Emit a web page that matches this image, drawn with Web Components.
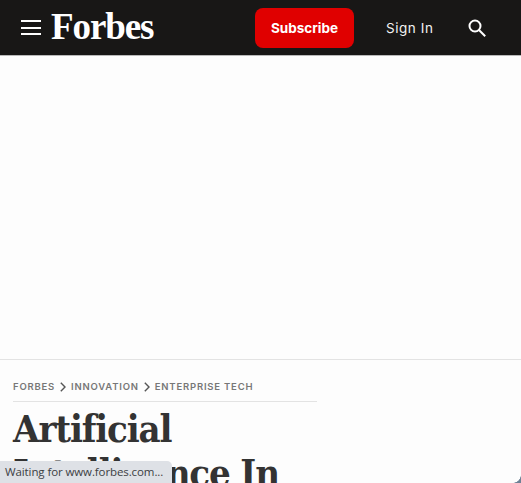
<!DOCTYPE html>
<html>
<head>
<meta charset="utf-8">
<style>
  html, body { margin: 0; height: 100%; overflow: hidden; background: #fdfdfd; }
</style>
</head>
<body>
<site-header></site-header>
<ad-space></ad-space>
<article-head>
  <bread-crumbs></bread-crumbs>
  Artificial Intelligence In
</article-head>
<status-bubble>Waiting for www.forbes.com...</status-bubble>
<window-corner></window-corner>

<script>
customElements.define('site-header', class extends HTMLElement {
  constructor() {
    super();
    this.attachShadow({mode: 'open'}).innerHTML = `
    <style>
      :host { display: flex; align-items: center; height: 55px; background: #181716; border-bottom: 1px solid #b9b9b9; color: #fff; font-family: Inter, "Liberation Sans", sans-serif; }
      .burger { display: flex; flex-direction: column; gap: 4.5px; width: 20px; margin-left: 21px; }
      .burger i { display: block; height: 2px; background: #fff; }
      .logo { font: bold 37px "Liberation Serif", serif; letter-spacing: -1.1px; margin-left: 10px; width: 104px; line-height: 1; padding-bottom: 3px; }
      .sub { margin-left: 100px; width: 99px; height: 40px; border-radius: 8px; background: #e00000; display: flex; align-items: center; justify-content: center; font-size: 13.5px; font-weight: 700; }
      .sign { margin-left: 32px; font-size: 13.5px; letter-spacing: .55px; color: #f2f2f2; }
      svg { margin-left: 35px; display: block; }
    </style>
    <div class="burger"><i></i><i></i><i></i></div>
    <div class="logo">Forbes</div>
    <div class="sub">Subscribe</div>
    <div class="sign">Sign In</div>
    <svg width="18" height="18" viewBox="0 0 18 18" fill="none" stroke="#fff" stroke-width="2"><circle cx="7" cy="7" r="5.5"/><path d="M11 11 17.2 17.2"/></svg>`;
  }
});

customElements.define('ad-space', class extends HTMLElement {
  constructor() {
    super();
    this.attachShadow({mode: 'open'}).innerHTML = `
    <style>
      :host { display: block; height: 303px; border-bottom: 1px solid #e3e3e3; }
    </style>`;
  }
});

customElements.define('bread-crumbs', class extends HTMLElement {
  constructor() {
    super();
    const chev = '<svg width="6" height="10" viewBox="0 0 6 10" fill="none" stroke="#555" stroke-width="1.4"><path d="M.8 .8 5 5 .8 9.2"/></svg>';
    this.attachShadow({mode: 'open'}).innerHTML = `
    <style>
      :host { display: flex; align-items: center; gap: 5px; height: 42px; box-sizing: border-box; padding-top: 12px; border-bottom: 1px solid #e3e3e3; font: 600 9.5px Inter, "Liberation Sans", sans-serif; letter-spacing: .8px; color: #777; }
    </style>
    <span>FORBES</span>${chev}<span>INNOVATION</span>${chev}<span>ENTERPRISE TECH</span>`;
  }
});

customElements.define('article-head', class extends HTMLElement {
  constructor() {
    super();
    this.attachShadow({mode: 'open'}).innerHTML = `
    <style>
      :host { display: block; width: 304px; margin-left: 13px; font: 700 38px/44px "DejaVu Serif", serif; font-stretch: condensed; color: #333; }
      .title { padding-top: 5px; letter-spacing: -1.15px; }
    </style>
    <slot name="crumbs"></slot>
    <div class="title"><slot></slot></div>`;
    const crumbs = this.querySelector('bread-crumbs');
    if (crumbs) crumbs.slot = 'crumbs';
  }
});

customElements.define('status-bubble', class extends HTMLElement {
  constructor() {
    super();
    this.attachShadow({mode: 'open'}).innerHTML = `
    <style>
      :host { position: fixed; left: 0; bottom: 0; width: 172px; height: 22px; box-sizing: border-box; padding-left: 5px; background: #dee1e6; border-top-right-radius: 5px; font: 11.5px/22px "Open Sans", "Liberation Sans", sans-serif; letter-spacing: -.1px; color: #3c4043; white-space: nowrap; }
    </style>
    <slot></slot>`;
  }
});

customElements.define('window-corner', class extends HTMLElement {
  constructor() {
    super();
    this.attachShadow({mode: 'open'}).innerHTML = `
    <style>
      :host { position: fixed; right: 0; bottom: 0; width: 8px; height: 8px; background: radial-gradient(circle at 0 0, transparent 7.5px, #6d8296 8px); }
    </style>`;
  }
});
</script>
</body>
</html>
